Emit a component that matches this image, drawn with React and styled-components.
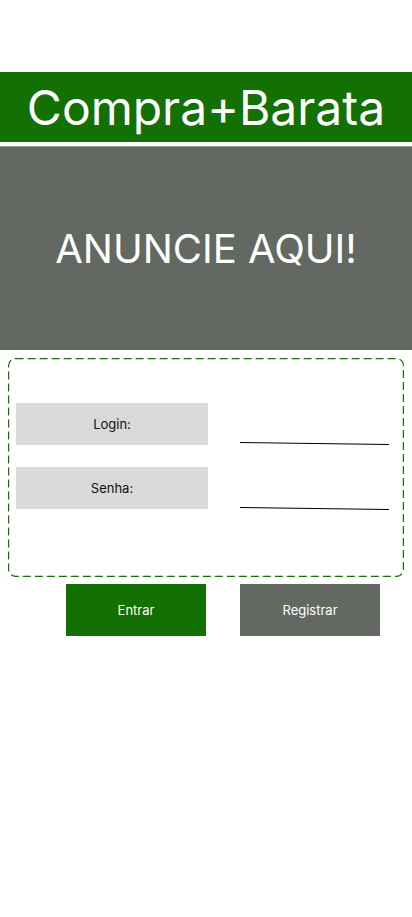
import React from 'react';
import styled, { createGlobalStyle } from 'styled-components';

const GREEN = '#137003';
const GRAY = '#646862';

const GlobalStyle = createGlobalStyle`
  body {
    margin: 0;
    background: #ffffff;
    font-family: Inter, "Noto Sans", sans-serif;
  }
`;

const Page = styled.div`
  width: 412px;
  min-height: 917px;
  padding-top: 72px;
  box-sizing: border-box;
  display: flex;
  flex-direction: column;
`;

const Header = styled.header`
  height: 70px;
  background: ${GREEN};
  display: flex;
  align-items: center;
  justify-content: center;
  color: #ffffff;
  font-size: 48px;
  font-weight: 400;
`;

const Banner = styled.section`
  margin-top: 4px;
  height: 204px;
  background: ${GRAY};
  border-top: 1px solid #9a9d98;
  box-sizing: border-box;
  display: flex;
  align-items: center;
  justify-content: center;
  color: #ffffff;
  font-size: 40px;
`;

const FormBox = styled.form`
  position: relative;
  margin: 8px 8px 0;
  height: 219px;
  box-sizing: border-box;
  padding: 45px 7px 0 8px;
  display: flex;
  flex-direction: column;
  gap: 22px;
`;

// dashed rounded outline of the form, drawn so the dash length matches
const DashedFrame = styled.svg`
  position: absolute;
  inset: 0;
  width: 100%;
  height: 100%;
  pointer-events: none;
`;

const Row = styled.div`
  display: grid;
  grid-template-columns: 192px 149px;
  column-gap: 32px;
  align-items: end;
`;

const Label = styled.label`
  height: 42px;
  background: #d9d9d9;
  display: flex;
  align-items: center;
  justify-content: center;
  font-size: 13px;
  color: #111111;
`;

const Underline = styled.svg`
  display: block;
  width: 149px;
  height: 3px;
  margin-bottom: ${p => p.$offset}px;
`;

const Buttons = styled.div`
  margin-top: 7px;
  padding-left: 66px;
  display: flex;
  gap: 34px;
`;

const Button = styled.button`
  width: 140px;
  height: 52px;
  border: none;
  background: ${p => (p.$primary ? GREEN : GRAY)};
  color: #ffffff;
  font-family: Inter, "Noto Sans", sans-serif;
  font-size: 13px;
`;

function Field({ label, offset }) {
  return (
    <Row>
      <Label>{label}</Label>
      <Underline $offset={offset} viewBox="0 0 149 3">
        <line x1="0" y1="0.5" x2="149" y2="2.5" stroke="#000" strokeWidth="1" />
      </Underline>
    </Row>
  );
}

export default function App() {
  return (
    <Page>
      <GlobalStyle />
      <Header>Compra+Barata</Header>
      <Banner>ANUNCIE AQUI!</Banner>
      <FormBox onSubmit={e => e.preventDefault()}>
        <DashedFrame>
          <rect
            x="0.6"
            y="0.6"
            width="394.8"
            height="217.8"
            rx="7"
            fill="none"
            stroke={GREEN}
            strokeWidth="1.2"
            strokeDasharray="8 4"
          />
        </DashedFrame>
        <Field label="Login:" offset={0} />
        <Field label="Senha:" offset={-1} />
      </FormBox>
      <Buttons>
        <Button $primary>Entrar</Button>
        <Button>Registrar</Button>
      </Buttons>
    </Page>
  );
}
